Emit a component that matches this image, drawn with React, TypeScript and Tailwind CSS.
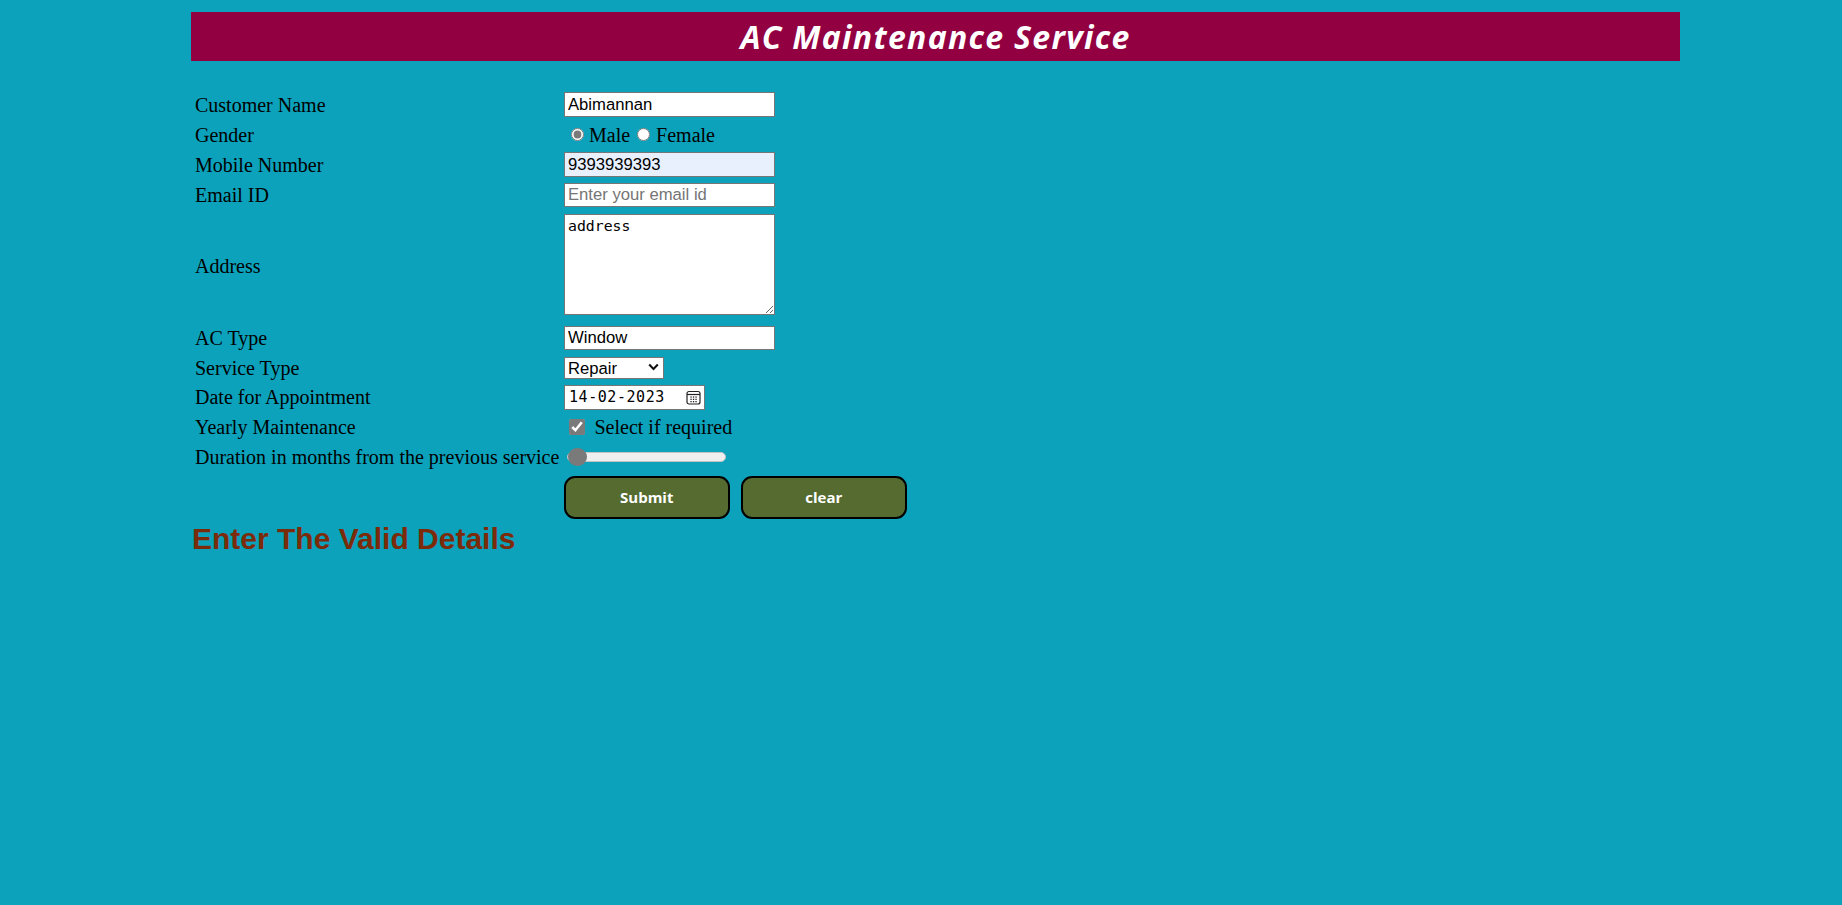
import React from "react";

const labelCls =
  "w-[373px] shrink-0 pl-[4px] text-[20px] text-black [font-family:'Liberation_Serif','Times_New_Roman',serif]";
const inputCls =
  "w-[211px] h-[24.5px] border border-[#767676] bg-white px-[3px] text-[16.67px] text-black outline-none [font-family:'Liberation_Sans',Arial,sans-serif] placeholder:text-[#757575]";

function CalendarIcon() {
  return (
    <svg width="15" height="15" viewBox="0 0 15 15" fill="none">
      <rect x="1" y="1.5" width="13" height="12.5" rx="2" stroke="#222" strokeWidth="1.2" />
      <line x1="1" y1="4.5" x2="14" y2="4.5" stroke="#222" strokeWidth="1.2" />
      {[5, 7.5, 10].map((x) =>
        [7, 9.3, 11.6].map((y) => (
          <rect key={`${x}-${y}`} x={x - 0.6} y={y - 0.6} width="1.3" height="1.3" fill="#222" />
        ))
      )}
    </svg>
  );
}

export default function App() {
  return (
    <div className="min-h-[905px] w-full bg-[#0da2bb] pt-[12px]">
      <div className="ml-[191px] w-[1489px]">
        <div className="flex h-[49px] items-center justify-center bg-[#930042]">
          <h1 className="text-[32px] font-bold italic text-white leading-none [font-family:'Open_Sans',sans-serif] tracking-[1.3px]">
            AC Maintenance Service
          </h1>
        </div>

        <form className="mt-[28.5px] flex flex-col" onSubmit={(e) => e.preventDefault()}>
          <div className="flex h-[30px] items-center">
            <label className={labelCls}>Customer Name</label>
            <input className={inputCls} defaultValue="Abimannan" />
          </div>

          <div className="flex h-[30px] items-center">
            <span className={labelCls}>Gender</span>
            <div className="flex items-center text-[20px] text-black [font-family:'Liberation_Serif','Times_New_Roman',serif]">
              <input
                type="radio"
                name="g"
                defaultChecked
                className="ml-[7px] mr-[5px] h-[13px] w-[13px] accent-[#7a7a7a]"
              />
              <span>Male</span>
              <input
                type="radio"
                name="g"
                className="ml-[7px] mr-[6px] h-[13px] w-[13px] accent-[#7a7a7a]"
              />
              <span>Female</span>
            </div>
          </div>

          <div className="flex h-[30px] items-center">
            <label className={labelCls}>Mobile Number</label>
            <input className={`${inputCls} !bg-[#e8f0fe]`} defaultValue="9393939393" />
          </div>

          <div className="flex h-[31px] items-center">
            <label className={labelCls}>Email ID</label>
            <input className={inputCls} placeholder="Enter your email id" />
          </div>

          <div className="flex h-[112.5px] items-center">
            <label className={`${labelCls} mb-[2.5px]`}>Address</label>
            <textarea
              className="mb-[5px] h-[100.6px] w-[211px] resize border border-[#767676] bg-white px-[3px] py-[2px] text-[14.8px] leading-[18px] text-black outline-none [font-family:'DejaVu_Sans_Mono',monospace]"
              defaultValue="address"
            />
          </div>

          <div className="flex h-[30px] items-center">
            <label className={labelCls}>AC Type</label>
            <input className={inputCls} defaultValue="Window" />
          </div>

          <div className="flex h-[29px] items-center">
            <label className={labelCls}>Service Type</label>
            <div className="relative">
              <select
                defaultValue="Repair"
                className="h-[21.6px] w-[100.4px] appearance-none border border-[#767676] bg-white pl-[3px] text-[16.67px] leading-[19px] text-black outline-none [font-family:'Liberation_Sans',Arial,sans-serif]"
              >
                <option>Repair</option>
                <option>Installation</option>
                <option>Service</option>
              </select>
              <svg
                className="pointer-events-none absolute right-[5px] top-[7px]"
                width="11"
                height="8"
                viewBox="0 0 11 8"
                fill="none"
              >
                <path d="M1.2 1.5 L5.5 6 L9.8 1.5" stroke="#111" strokeWidth="2" />
              </svg>
            </div>
          </div>

          <div className="flex h-[30px] items-center">
            <label className={labelCls}>Date for Appointment</label>
            <div className="flex h-[25px] w-[141.4px] items-center justify-between border border-[#767676] bg-white pl-[4px] pr-[3px]">
              <span className="text-[15px] tracking-[0.55px] text-black [font-family:'DejaVu_Sans_Mono',monospace]">
                14-02-2023
              </span>
              <CalendarIcon />
            </div>
          </div>

          <div className="flex h-[29px] items-center">
            <span className={labelCls}>Yearly Maintenance</span>
            <label className="flex items-center text-[20px] text-black [font-family:'Liberation_Serif','Times_New_Roman',serif]">
              <input
                type="checkbox"
                defaultChecked
                className="ml-[4.5px] mr-[10px] h-[16px] w-[16px] accent-[#7a7a7a]"
              />
              Select if required
            </label>
          </div>

          <div className="flex h-[32px] items-center">
            <label className={labelCls}>Duration in months from the previous service</label>
            <input
              type="range"
              min={0}
              max={12}
              defaultValue={0}
              className="ml-[3px] h-[9.5px] w-[159px] cursor-pointer appearance-none rounded-full border border-[#c4c4c4] bg-[#efefef] [&::-webkit-slider-thumb]:h-[18.5px] [&::-webkit-slider-thumb]:w-[18.5px] [&::-webkit-slider-thumb]:appearance-none [&::-webkit-slider-thumb]:rounded-full [&::-webkit-slider-thumb]:bg-[#7a7a7a]"
            />
          </div>

          <div className="flex h-[49px] items-center">
            <span className="w-[373px] shrink-0" />
            <div className="flex gap-[11.5px]">
              <button
                type="submit"
                className="h-[43.3px] w-[165.5px] rounded-[11px] border-[2.5px] border-black bg-[#566b30] text-[15px] font-bold text-white [font-family:'Open_Sans',sans-serif]"
              >
                Submit
              </button>
              <button
                type="reset"
                className="h-[43.3px] w-[165.5px] rounded-[11px] border-[2.5px] border-black bg-[#566b30] text-[15px] font-bold text-white [font-family:'Open_Sans',sans-serif]"
              >
                clear
              </button>
            </div>
          </div>
        </form>

        <h2 className="ml-[1px] text-[30px] font-bold leading-[34px] text-[#7b2b0a] [font-family:'Liberation_Sans',Arial,sans-serif]">
          Enter The Valid Details
        </h2>
      </div>
    </div>
  );
}
